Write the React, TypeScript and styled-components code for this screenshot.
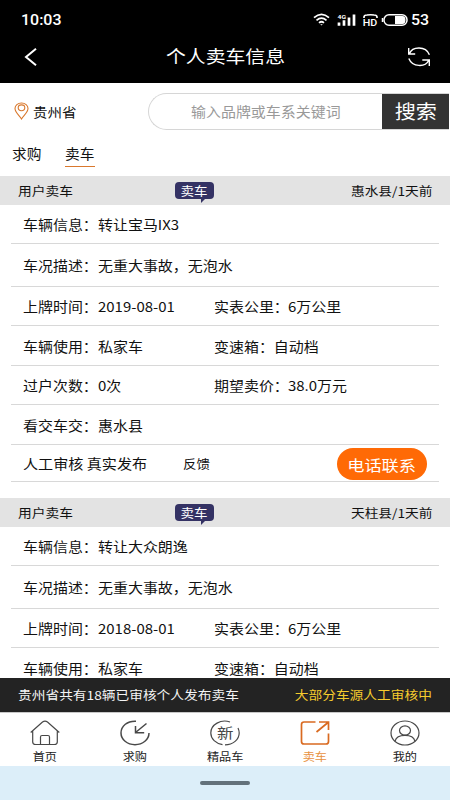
import React from 'react';
import styled, { createGlobalStyle } from 'styled-components';

const Global = createGlobalStyle`
  * { box-sizing: border-box; }
  body { margin: 0; background: #fff; overflow: hidden; font-family: "Noto Sans CJK SC", sans-serif; color: #111; }
  button { font-family: inherit; border: 0; padding: 0; cursor: pointer; }
`;

type Origin = 'left' | 'center' | 'right';

/* Widened lettering: every label on the page is set a little broader than its height. */
const Label = styled.span<{ $size?: number; $stretch?: number; $origin?: Origin }>`
  display: inline-block;
  font-size: ${p => p.$size ?? 13.3}px;
  line-height: 20px;
  white-space: pre;
  transform: scaleX(${p => p.$stretch ?? 1.125});
  transform-origin: ${p => p.$origin ?? 'left'} center;
`;

const Screen = styled.div`
  width: 450px;
  height: 800px;
  display: flex;
  flex-direction: column;
  overflow: hidden;
  background: #fff;
`;

const Top = styled.header`
  flex: none;
  height: 83px;
  background: #000;
  color: #fff;
`;

const StatusBar = styled.div`
  height: 38px;
  padding: 1px 21px 0 21px;
  display: flex;
  align-items: center;
  justify-content: space-between;
  font-family: Roboto, sans-serif;
  font-weight: 500;
`;

const StatusIcons = styled.svg`
  display: block;
  width: 96px;
  height: 20px;
`;

const StatusRight = styled.div`
  display: flex;
  align-items: center;
  gap: 2px;
  width: 116px;
`;

const TitleBar = styled.div`
  height: 37px;
  padding: 0 19px 0 24px;
  display: grid;
  grid-template-columns: 19px 1fr 24px;
  align-items: center;
  justify-items: center;
  svg:first-child { justify-self: start; }
  span { margin-bottom: 2px; }
`;

const Icon = styled.svg`
  display: block;
  flex: none;
  fill: none;
  stroke: currentColor;
`;

const SearchRow = styled.div`
  flex: none;
  height: 57px;
  padding: 10px 1px 0 14px;
  display: flex;
  justify-content: space-between;
`;

const Place = styled.div`
  height: 37px;
  display: flex;
  align-items: center;
  gap: 4px;
  padding-top: 1px;
  svg { color: #d9782d; margin-top: -2px; }
`;

const SearchBox = styled.div`
  width: 301px;
  height: 37px;
  display: flex;
  border: 1px solid #d6d6d6;
  border-right: 0;
  border-radius: 19px 0 0 19px;
`;

const Placeholder = styled.div`
  flex: 1;
  display: flex;
  align-items: center;
  padding-left: 42px;
  color: #999;
`;

const SearchButton = styled.button`
  width: 67px;
  background: #333;
  color: #fff;
`;

const Tabs = styled.nav`
  flex: none;
  height: 36px;
  padding-left: 12px;
  display: flex;
  gap: 23px;
`;

const Tab = styled.div<{ $active?: boolean }>`
  width: 30px;
  height: 27px;
  padding-top: 4px;
  border-bottom: 1px solid ${p => (p.$active ? '#d9782d' : 'transparent')};
  span { display: block; }
`;

const List = styled.main`
  flex: 1;
  min-height: 0;
  overflow: hidden;
`;

const Card = styled.article`
  height: 322px;
`;

const CardHead = styled.div`
  height: 29px;
  padding: 0 18px;
  display: grid;
  grid-template-columns: 157px 1fr auto;
  align-items: center;
  background: #e3e3e3;
`;

const Tag = styled.div`
  position: relative;
  width: 39px;
  height: 17px;
  display: flex;
  align-items: center;
  justify-content: center;
  border-radius: 4px;
  background: #343264;
  color: #fff;
  &::after {
    content: '';
    position: absolute;
    right: 8px;
    bottom: -4px;
    border-top: 5px solid #343264;
    border-right: 5px solid transparent;
  }
`;

const Rows = styled.div`
  margin: 0 11px;
`;

const Row = styled.div<{ $height: number }>`
  height: ${p => p.$height}px;
  padding: 2px 0 0 12px;
  display: grid;
  grid-template-columns: 75px 116px 74px 1fr;
  align-items: center;
  border-bottom: 1px solid #d8d8d8;
`;

const FootRow = styled(Row)`
  grid-template-columns: 160px 154px 90px;
`;

const CallButton = styled.button`
  height: 32px;
  border-radius: 16px;
  background: #ff6a06;
  color: #fff;
`;

const Notice = styled.div`
  flex: none;
  height: 34px;
  padding: 0 18px;
  display: flex;
  align-items: center;
  justify-content: space-between;
  background: #232323;
  color: #f4f4f4;
`;

const Gold = styled(Label)`
  color: #f5cb2e;
`;

const BottomNav = styled.nav`
  flex: none;
  height: 54px;
  display: grid;
  grid-template-columns: repeat(5, 1fr);
  border-top: 1px solid #c8c8c8;
`;

const NavItem = styled.div<{ $active?: boolean }>`
  display: flex;
  flex-direction: column;
  align-items: center;
  padding-top: 7px;
  color: ${p => (p.$active ? '#d96a20' : '#484848')};
`;

const NavLabel = styled(Label).attrs({ $size: 10.8, $origin: 'center' as Origin })<{ $active?: boolean }>`
  line-height: 16px;
  margin-top: 2px;
  color: ${p => (p.$active ? '#e8913f' : '#222')};
`;

const HomeArea = styled.div`
  flex: none;
  height: 34px;
  display: flex;
  justify-content: center;
  padding-top: 15px;
  background: #dceef9;
`;

const HomeHandle = styled.div`
  width: 50px;
  height: 4px;
  border-radius: 2px;
  background: #63717b;
`;

interface Car {
  place: string;
  model: string;
  date: string;
}

const cars: Car[] = [
  { place: '惠水县/1天前', model: '转让宝马IX3', date: '2019-08-01' },
  { place: '天柱县/1天前', model: '转让大众朗逸', date: '2018-08-01' },
];

const CarCard = ({ car }: { car: Car }) => (
  <Card>
    <CardHead>
      <Label $size={12.2}>用户卖车</Label>
      <Tag><Label $size={12} $origin="center">卖车</Label></Tag>
      <Label $size={12.2} $origin="right">{car.place}</Label>
    </CardHead>
    <Rows>
      <Row $height={39}><Label>车辆信息：</Label><Label>{car.model}</Label></Row>
      <Row $height={43}><Label>车况描述：</Label><Label>无重大事故，无泡水</Label></Row>
      <Row $height={39}>
        <Label>上牌时间：</Label><Label>{car.date}</Label><Label>实表公里：</Label><Label>6万公里</Label>
      </Row>
      <Row $height={40}>
        <Label>车辆使用：</Label><Label>私家车</Label><Label>变速箱：自动档</Label>
      </Row>
      <Row $height={39}>
        <Label>过户次数：</Label><Label>0次</Label><Label>期望卖价：</Label><Label>38.0万元</Label>
      </Row>
      <Row $height={40}><Label>看交车交：</Label><Label>惠水县</Label></Row>
      <FootRow $height={37}>
        <Label $stretch={1.135}>人工审核 真实发布</Label>
        <Label $size={12}>反馈</Label>
        <CallButton><Label $size={15.3} $origin="center">电话联系</Label></CallButton>
      </FootRow>
    </Rows>
  </Card>
);

const App = () => (
  <>
    <Global />
    <Screen>
      <Top>
        <StatusBar>
          <Label $size={14} $stretch={1.14}>10:03</Label>
          <StatusRight>
            <StatusIcons viewBox="0 0 96 20" fill="none" stroke="#fff">
              <g strokeWidth="1.7">
                <path d="M1 7.7Q8.5 1 16 7.7M3.5 10.3Q8.5 6 13.5 10.3M6 12.8Q8.5 10.7 11 12.8" />
                <path d="M7.2 14.3h2.6l-1.3 1.3z" fill="#fff" stroke="none" />
              </g>
              <path d="M26 15.7v-3.3M31 15.7v-5.5M36 15.7V7.5M41 15.7V4.5" strokeWidth="2.7" />
              <text x="24.5" y="8.7" fontSize="6.2" textLength="8.5" lengthAdjust="spacingAndGlyphs" fill="#fff" stroke="none" fontWeight="700" fontFamily="Roboto">4G</text>
              <text x="49.8" y="16" fontSize="9.3" textLength="14.5" lengthAdjust="spacingAndGlyphs" fill="#fff" stroke="none" fontWeight="500" fontFamily="Roboto">HD</text>
              <path d="M51 8V7q0-1.8 3-2 3.5-.5 7 0 3 .2 3 2v1" strokeWidth="1.7" />
              <rect x="71" y="4.7" width="23" height="10.5" rx="5" strokeWidth="1.5" />
              <path d="M69.5 8v4" strokeWidth="1.5" />
              <path d="M82 6h7.5q3 0 3 4t-3 4h-7.5z" fill="#fff" stroke="none" />
            </StatusIcons>
            <Label $size={14} $stretch={1.14}>53</Label>
          </StatusRight>
        </StatusBar>
        <TitleBar>
          <Icon width="14" height="20" viewBox="0 0 14 20" strokeWidth="2"><path d="M12 1.7 2 10l10 8.3" /></Icon>
          <Label $size={17.5} $stretch={1.135} $origin="center">个人卖车信息</Label>
          <Icon width="24" height="22" viewBox="0 0 24 22" strokeWidth="1.4">
            <path d="M1.7 2v6h6.5M2.5 7.5C5 .6 18.5-.8 22.4 8.7M22.3 20v-6h-7M21.6 14.5C18.5 21.3 5.5 21.5 1.8 12.5" />
          </Icon>
        </TitleBar>
      </Top>
      <SearchRow>
        <Place>
          <Icon width="15" height="18" viewBox="0 0 15 18" strokeWidth="1.1">
            <path d="M7.5 17C5.5 13.5 1 10.5 1 6.6 1 3.4 3.8 1 7.5 1S14 3.4 14 6.6c0 3.9-4.5 6.9-6.5 10.4z" />
            <ellipse cx="7.5" cy="5.8" rx="3.3" ry="2.9" />
          </Icon>
          <Label $size={12.9}>贵州省</Label>
        </Place>
        <SearchBox>
          <Placeholder><Label>输入品牌或车系关键词</Label></Placeholder>
          <SearchButton><Label $size={18.8} $origin="center">搜索</Label></SearchButton>
        </SearchBox>
      </SearchRow>
      <Tabs>
        <Tab><Label $size={13.1}>求购</Label></Tab>
        <Tab $active><Label $size={13.1}>卖车</Label></Tab>
      </Tabs>
      <List>{cars.map(car => <CarCard key={car.date} car={car} />)}</List>
      <Notice>
        <Label $size={12.2}>贵州省共有18辆已审核个人发布卖车</Label>
        <Gold $size={12.2} $origin="right">大部分车源人工审核中</Gold>
      </Notice>
      <BottomNav>
        <NavItem>
          <Icon width="30" height="26" viewBox="0 0 30 26" strokeWidth="1.2">
            <path d="M.7 12.5 12.5 2q2.5-1.8 5 0L29.3 12.5M2.7 11v11q0 2.5 3 2.5h18.6q3 0 3-2.5V11M10.5 24v-7q0-1.5 1.5-1.5h6q1.5 0 1.5 1.5v7" />
          </Icon>
          <NavLabel>首页</NavLabel>
        </NavItem>
        <NavItem>
          <Icon width="30" height="26" viewBox="0 0 30 26" strokeWidth="1.5">
            <path d="M16 1.2C7.5.7 1 6 1 13c0 6.5 6.2 11.7 14 11.7S29 19.5 29 13M26.5 3.5 15.5 12.5M15.5 6v6.7h8.7" />
          </Icon>
          <NavLabel>求购</NavLabel>
        </NavItem>
        <NavItem>
          <Icon width="30" height="26" viewBox="0 0 30 26" strokeWidth="1.2">
            <path d="M20 2C11-1.2.8 4.5.8 13c0 6 5 10.6 11.7 11.6M15 24.8C23 24.8 29.2 19.5 29.2 13q0-2.5-1.2-5" />
            <text x="7" y="18" fontSize="14" textLength="16.5" lengthAdjust="spacingAndGlyphs" fill="#484848" stroke="none">新</text>
          </Icon>
          <NavLabel>精品车</NavLabel>
        </NavItem>
        <NavItem $active>
          <Icon width="30" height="26" viewBox="0 0 30 26" strokeWidth="1.7">
            <path d="M15.500 2H4Q1.500 2 1.500 4.500v17Q1.500 24 4 24h22q2.500 0 2.500-2.500v-8M19 2h9.500v8M28 2.500 16.500 12" />
          </Icon>
          <NavLabel $active>卖车</NavLabel>
        </NavItem>
        <NavItem>
          <Icon width="30" height="26" viewBox="0 0 30 26" strokeWidth="1.2">
            <ellipse cx="15" cy="13" rx="14" ry="12" />
            <ellipse cx="15" cy="10.5" rx="5.5" ry="4.7" />
            <path d="M5 21.3C7 13.5 23 13.5 25 21.3" />
          </Icon>
          <NavLabel>我的</NavLabel>
        </NavItem>
      </BottomNav>
      <HomeArea><HomeHandle /></HomeArea>
    </Screen>
  </>
);

export default App;
